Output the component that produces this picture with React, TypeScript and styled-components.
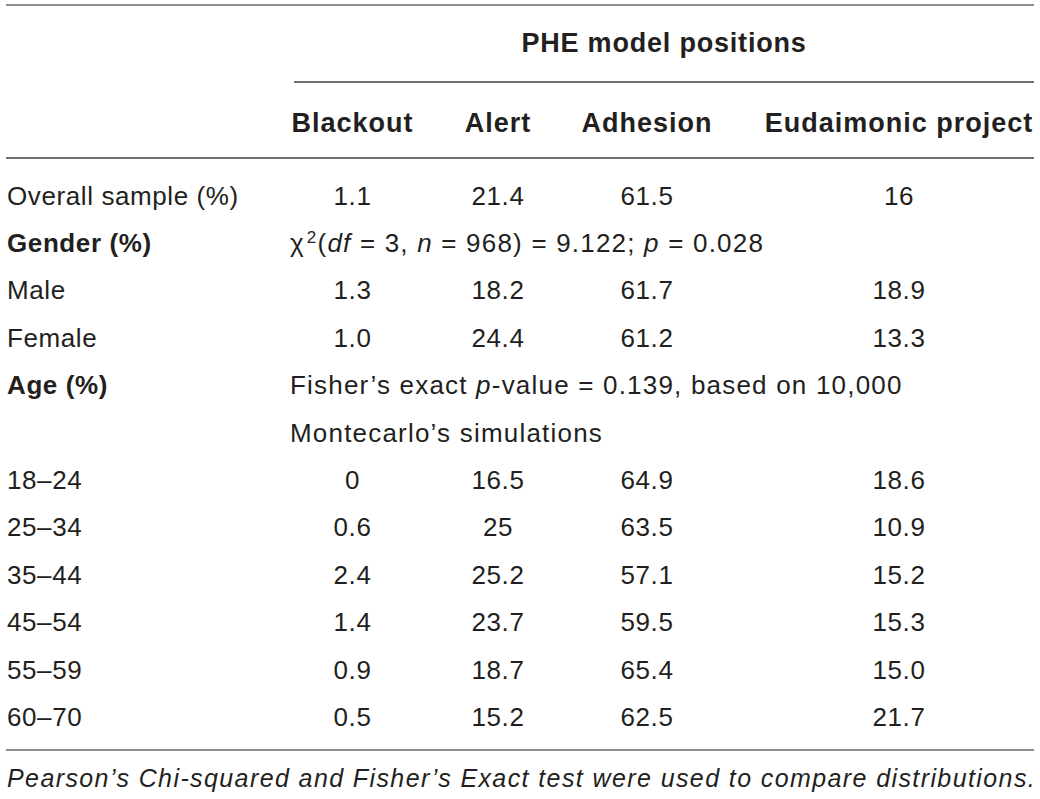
import React from 'react'
import styled, { createGlobalStyle } from 'styled-components'

const GlobalStyle = createGlobalStyle`
  body {
    margin: 0;
    background: #ffffff;
    font-family: "Liberation Sans", Arial, sans-serif;
    color: #231f20;
  }
`

const COLUMNS = '259px 175px 116px 182px 296px'

const Table = styled.div`
  width: 1028px;
  margin: 0 6px;
  padding-top: 4px;
`

const GroupRow = styled.div`
  display: grid;
  grid-template-columns: ${COLUMNS};
  border-top: 2px solid #8d8d8d;
`

const GroupHead = styled.div`
  grid-column: 2 / 6;
  margin-left: 29px;
  height: 77px;
  box-sizing: border-box;
  border-bottom: 2px solid #6f6f6f;
  display: flex;
  align-items: center;
  justify-content: center;
  font-size: 27px;
  font-weight: 700;
  letter-spacing: 0.8px;
`

const HeadRow = styled.div`
  display: grid;
  grid-template-columns: ${COLUMNS};
  height: 76px;
  box-sizing: border-box;
  border-bottom: 2px solid #6f6f6f;
`

const HeadCell = styled.div<{ $last?: boolean }>`
  display: flex;
  align-items: center;
  justify-content: center;
  padding-top: 6px;
  padding-left: ${(p) => (p.$last ? '26px' : '0')};
  font-size: 27px;
  font-weight: 700;
  letter-spacing: 1px;
  white-space: nowrap;
`

const Body = styled.div`
  padding: 13px 0 8px;
  border-bottom: 2px solid #8d8d8d;
`

const Row = styled.div`
  display: grid;
  grid-template-columns: ${COLUMNS};
  height: 47.4px;
  align-items: center;
  font-size: 26px;
  letter-spacing: 0.6px;
  line-height: 30px;
`

const Label = styled.div<{ $bold?: boolean }>`
  padding-left: 1px;
  font-weight: ${(p) => (p.$bold ? 700 : 400)};
  white-space: nowrap;
`

const Value = styled.div<{ $last?: boolean }>`
  text-align: center;
  padding-left: ${(p) => (p.$last ? '26px' : '0')};
`

const Stat = styled.div`
  grid-column: 2 / 6;
  padding-left: 25px;
  letter-spacing: 1.2px;
  white-space: nowrap;
`

const Sup = styled.sup`
  font-size: 17px;
  vertical-align: 9px;
  line-height: 0;
  margin-left: 2px;
`

const Footnote = styled.div`
  margin-top: 12px;
  padding-left: 1px;
  font-size: 25px;
  font-style: italic;
  letter-spacing: 1.4px;
  line-height: 30px;
  white-space: nowrap;
`

type DataRow = { label: string; values: string[] }

const overall: DataRow = { label: 'Overall sample (%)', values: ['1.1', '21.4', '61.5', '16'] }

const gender: DataRow[] = [
  { label: 'Male', values: ['1.3', '18.2', '61.7', '18.9'] },
  { label: 'Female', values: ['1.0', '24.4', '61.2', '13.3'] },
]

const ages: DataRow[] = [
  { label: '18–24', values: ['0', '16.5', '64.9', '18.6'] },
  { label: '25–34', values: ['0.6', '25', '63.5', '10.9'] },
  { label: '35–44', values: ['2.4', '25.2', '57.1', '15.2'] },
  { label: '45–54', values: ['1.4', '23.7', '59.5', '15.3'] },
  { label: '55–59', values: ['0.9', '18.7', '65.4', '15.0'] },
  { label: '60–70', values: ['0.5', '15.2', '62.5', '21.7'] },
]

const positions = ['Blackout', 'Alert', 'Adhesion', 'Eudaimonic project']

function ValueRow({ row }: { row: DataRow }) {
  return (
    <Row>
      <Label>{row.label}</Label>
      {row.values.map((v, i) => (
        <Value key={i} $last={i === row.values.length - 1}>
          {v}
        </Value>
      ))}
    </Row>
  )
}

export default function App() {
  return (
    <>
      <GlobalStyle />
      <Table>
        <GroupRow>
          <GroupHead>PHE model positions</GroupHead>
        </GroupRow>
        <HeadRow>
          <div />
          {positions.map((p, i) => (
            <HeadCell key={p} $last={i === positions.length - 1}>
              {p}
            </HeadCell>
          ))}
        </HeadRow>
        <Body>
          <ValueRow row={overall} />
          <Row>
            <Label $bold>Gender (%)</Label>
            <Stat>
              χ<Sup>2</Sup>(<i>df</i> = 3, <i>n</i> = 968) = 9.122; <i>p</i> = 0.028
            </Stat>
          </Row>
          {gender.map((r) => (
            <ValueRow key={r.label} row={r} />
          ))}
          <Row>
            <Label $bold>Age (%)</Label>
            <Stat>
              Fisher’s exact <i>p</i>-value = 0.139, based on 10,000
            </Stat>
          </Row>
          <Row>
            <Label />
            <Stat>Montecarlo’s simulations</Stat>
          </Row>
          {ages.map((r) => (
            <ValueRow key={r.label} row={r} />
          ))}
        </Body>
        <Footnote>Pearson’s Chi-squared and Fisher’s Exact test were used to compare distributions.</Footnote>
      </Table>
    </>
  )
}
